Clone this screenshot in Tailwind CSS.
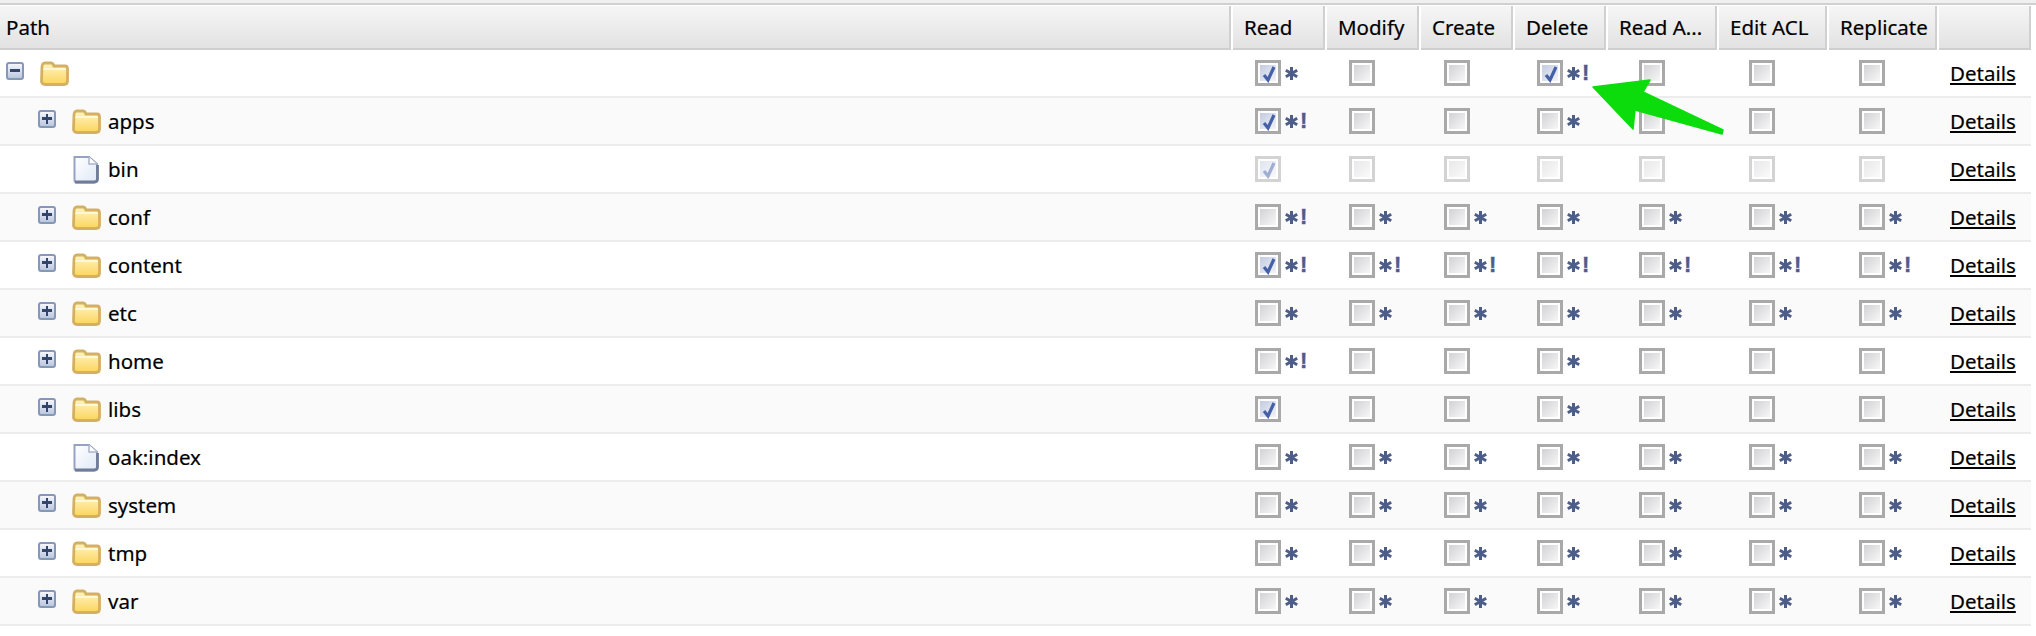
<!DOCTYPE html>
<html lang="en">
<head>
  <meta charset="UTF-8" />
  <title>Permissions</title>
  <script src="https://cdn.jsdelivr.net/npm/@tailwindcss/browser@4"></script>
</head>
<body class="bg-white text-black font-['Noto_Sans',sans-serif] text-[20.500px] [-webkit-text-stroke:0.2px_black] w-[2036px] h-[636px] overflow-hidden relative">

  <!-- Top edge -->
  <div class="h-[3px] bg-[#f0f0f0] border-b-2 border-[#d0d0d0] box-content"></div>

  <!-- Header -->
  <div class="grid grid-cols-[1231px_94px_94px_94px_93px_111px_110px_110px_94px] h-[44px] mt-px w-[2031px]">
    <div class="flex items-center pl-[6px] bg-linear-to-b from-[#f6f6f6] to-[#e2e2e2] border-r-2 border-[#d0d0d0] border-b-2 border-b-[#cfcfcf]">Path</div>
    <div class="flex items-center pl-[11px] ml-0.5 bg-linear-to-b from-[#f6f6f6] to-[#e2e2e2] border-r-2 border-[#d0d0d0] border-b-2 border-b-[#cfcfcf]">Read</div>
    <div class="flex items-center pl-[11px] ml-0.5 bg-linear-to-b from-[#f6f6f6] to-[#e2e2e2] border-r-2 border-[#d0d0d0] border-b-2 border-b-[#cfcfcf]">Modify</div>
    <div class="flex items-center pl-[11px] ml-0.5 bg-linear-to-b from-[#f6f6f6] to-[#e2e2e2] border-r-2 border-[#d0d0d0] border-b-2 border-b-[#cfcfcf]">Create</div>
    <div class="flex items-center pl-[11px] ml-0.5 bg-linear-to-b from-[#f6f6f6] to-[#e2e2e2] border-r-2 border-[#d0d0d0] border-b-2 border-b-[#cfcfcf]">Delete</div>
    <div class="flex items-center pl-[11px] ml-0.5 bg-linear-to-b from-[#f6f6f6] to-[#e2e2e2] border-r-2 border-[#d0d0d0] border-b-2 border-b-[#cfcfcf]">Read A...</div>
    <div class="flex items-center pl-[11px] ml-0.5 bg-linear-to-b from-[#f6f6f6] to-[#e2e2e2] border-r-2 border-[#d0d0d0] border-b-2 border-b-[#cfcfcf]">Edit ACL</div>
    <div class="flex items-center pl-[11px] ml-0.5 bg-linear-to-b from-[#f6f6f6] to-[#e2e2e2] border-r-2 border-[#d0d0d0] border-b-2 border-b-[#cfcfcf]">Replicate</div>
    <div class="flex items-center pl-[11px] ml-0.5 bg-linear-to-b from-[#f6f6f6] to-[#e2e2e2] border-r-2 border-[#d0d0d0] border-b-2 border-b-[#cfcfcf]"></div>
  </div>

  <!-- Rows -->
  <div id="rows" class="w-[2031px]"></div>

  <!-- Green arrow annotation -->
  <svg class="absolute left-[1585px] top-[72px]" width="146" height="70" viewBox="1585 72 146 70">
    <polygon points="1593,87 1650,80 1643,92 1723,130 1722,134 1635,110 1633,129" fill="#0cdc0c" stroke="#0cdc0c" stroke-width="1.500" stroke-linejoin="round" />
  </svg>

  <script>
    const rows = [
      { name: "", type: "folder", depth: 0, cells: ["c*", "", "", "c*!", "", "", ""] },
      { name: "apps", type: "folder", depth: 1, cells: ["c*!", "", "", "*", "", "", ""] },
      { name: "bin", type: "file", depth: 1, off: true, cells: ["c", "", "", "", "", "", ""] },
      { name: "conf", type: "folder", depth: 1, cells: ["*!", "*", "*", "*", "*", "*", "*"] },
      { name: "content", type: "folder", depth: 1, cells: ["c*!", "*!", "*!", "*!", "*!", "*!", "*!"] },
      { name: "etc", type: "folder", depth: 1, cells: ["*", "*", "*", "*", "*", "*", "*"] },
      { name: "home", type: "folder", depth: 1, cells: ["*!", "", "", "*", "", "", ""] },
      { name: "libs", type: "folder", depth: 1, cells: ["c", "", "", "*", "", "", ""] },
      { name: "oak:index", type: "file", depth: 1, cells: ["*", "*", "*", "*", "*", "*", "*"] },
      { name: "system", type: "folder", depth: 1, cells: ["*", "*", "*", "*", "*", "*", "*"] },
      { name: "tmp", type: "folder", depth: 1, cells: ["*", "*", "*", "*", "*", "*", "*"] },
      { name: "var", type: "folder", depth: 1, cells: ["*", "*", "*", "*", "*", "*", "*"] }
    ];

    // left padding of the checkbox in each permission column
    const pads = ["pl-[24px]", "pl-[24px]", "pl-[25px]", "pl-[24px]", "pl-[33px]", "pl-[32px]", "pl-[32px]"];

    const folder = `<svg class="shrink-0" width="29" height="25" viewBox="0 0 29 25">
      <defs><linearGradient id="fold" x1="0" y1="0" x2="0" y2="1"><stop offset="0" stop-color="#fff4c4" /><stop offset="1" stop-color="#fbd55c" /></linearGradient></defs>
      <path d="M2 6 Q2 2 5 2 H11 Q13 2 14 5 H25 Q27.500 5 27.500 8 V20 Q27.500 23.500 24 23.500 H5 Q1.500 23.500 1.500 20 Z" fill="url(#fold)" stroke="#d4b062" stroke-width="2.800" />
      <path d="M3.500 8 H26" stroke="#fffbe6" stroke-width="1.500" />
    </svg>`;

    const file = `<svg class="shrink-0" width="27" height="29" viewBox="0 0 27 29">
      <defs><linearGradient id="page" x1="0" y1="0" x2="1" y2="1"><stop offset="0" stop-color="#ffffff" /><stop offset="1" stop-color="#dfe8f6" /></linearGradient></defs>
      <path d="M2.500 2 H17 L25 9 V25 Q25 27.500 22 27.500 H5 Q2.500 27.500 2.500 25 Z" fill="url(#page)" stroke="#96a3c0" stroke-width="2" />
      <path d="M17 2 V9 H25" fill="#fff" stroke="#a9b4cc" stroke-width="1.500" />
      <path d="M3 27 H22 Q25.500 27 25.500 24 V10" fill="none" stroke="#6f7b98" stroke-width="2.800" />
    </svg>`;

    const toggle = open => `<span class="shrink-0 mb-[5px] w-[18px] h-[18px] rounded-[3px] border-2 border-[#8698ba] bg-linear-to-b from-[#f4f6fb] to-[#bcc8de] flex items-center justify-center relative">
      <span class="absolute w-[10px] h-[2.500px] bg-[#33456e]"></span>
      ${open ? "" : '<span class="absolute w-[2.500px] h-[10px] bg-[#33456e]"></span>'}
    </span>`;

    const star = `<svg class="shrink-0 ml-[3px]" width="15" height="15" viewBox="0 0 15 15">
      <path d="M7.500 1 V14 M1.800 4.200 L13.200 10.800 M13.200 4.200 L1.800 10.800" stroke="#4d5d8a" stroke-width="3" />
    </svg>`;

    function checkbox(state, off) {
      const checked = state.includes("c");
      const inner = checked
        ? "bg-linear-to-br from-[#c3cbe0] to-[#f2f4f9]"
        : "bg-linear-to-br from-[#d2d2d6] to-[#f7f7f7]";
      const tick = checked
        ? `<svg class="absolute left-[3px] top-[2px]" width="16" height="18" viewBox="0 0 16 18"><path d="M3 10 L7 15 L13 2" fill="none" stroke="#4660a8" stroke-width="3.200" /></svg>`
        : "";
      return `<span class="relative shrink-0 w-[26px] h-[26px] border-[3px] border-[#a9a9a9] bg-white p-[2px] ${off ? "opacity-50" : ""}">
        <span class="block w-full h-full ${inner}"></span>${tick}
      </span>`;
    }

    function cell(state, pad, off) {
      const bang = state.includes("!")
        ? `<span class="ml-px w-[6px] font-['Liberation_Sans',sans-serif] font-bold text-[22px] leading-none text-[#4d5d8a] [-webkit-text-stroke:0.4px_#4d5d8a]">!</span>`
        : "";
      return `<div class="flex items-center ${pad}">${checkbox(state, off)}${state.includes("*") ? star : ""}${bang}</div>`;
    }

    document.getElementById("rows").innerHTML = rows.map((row, i) => {
      const indent = row.depth === 0 ? "pl-[6px]" : "pl-[38px]";
      const toggler = row.type === "folder"
        ? toggle(row.depth === 0)
        : `<span class="shrink-0 w-[18px]"></span>`;
      const shade = i % 2 ? "bg-[#fafafa]" : "bg-white";
      return `<div class="grid grid-cols-[1231px_94px_94px_94px_93px_111px_110px_110px_94px] h-[48px] border-b-2 border-[#ececec] ${shade}">
        <div class="flex items-center ${indent}">
          ${toggler}
          <span class="ml-4 flex">${row.type === "folder" ? folder : file}</span>
          <span class="${row.type === "folder" ? "ml-[7px]" : "ml-[9px]"}">${row.name}</span>
        </div>
        ${row.cells.map((c, j) => cell(c, pads[j], row.off)).join("")}
        <div class="flex items-center pl-[13px]"><a href="#" class="underline">Details</a></div>
      </div>`;
    }).join("");
  </script>
</body>
</html>
